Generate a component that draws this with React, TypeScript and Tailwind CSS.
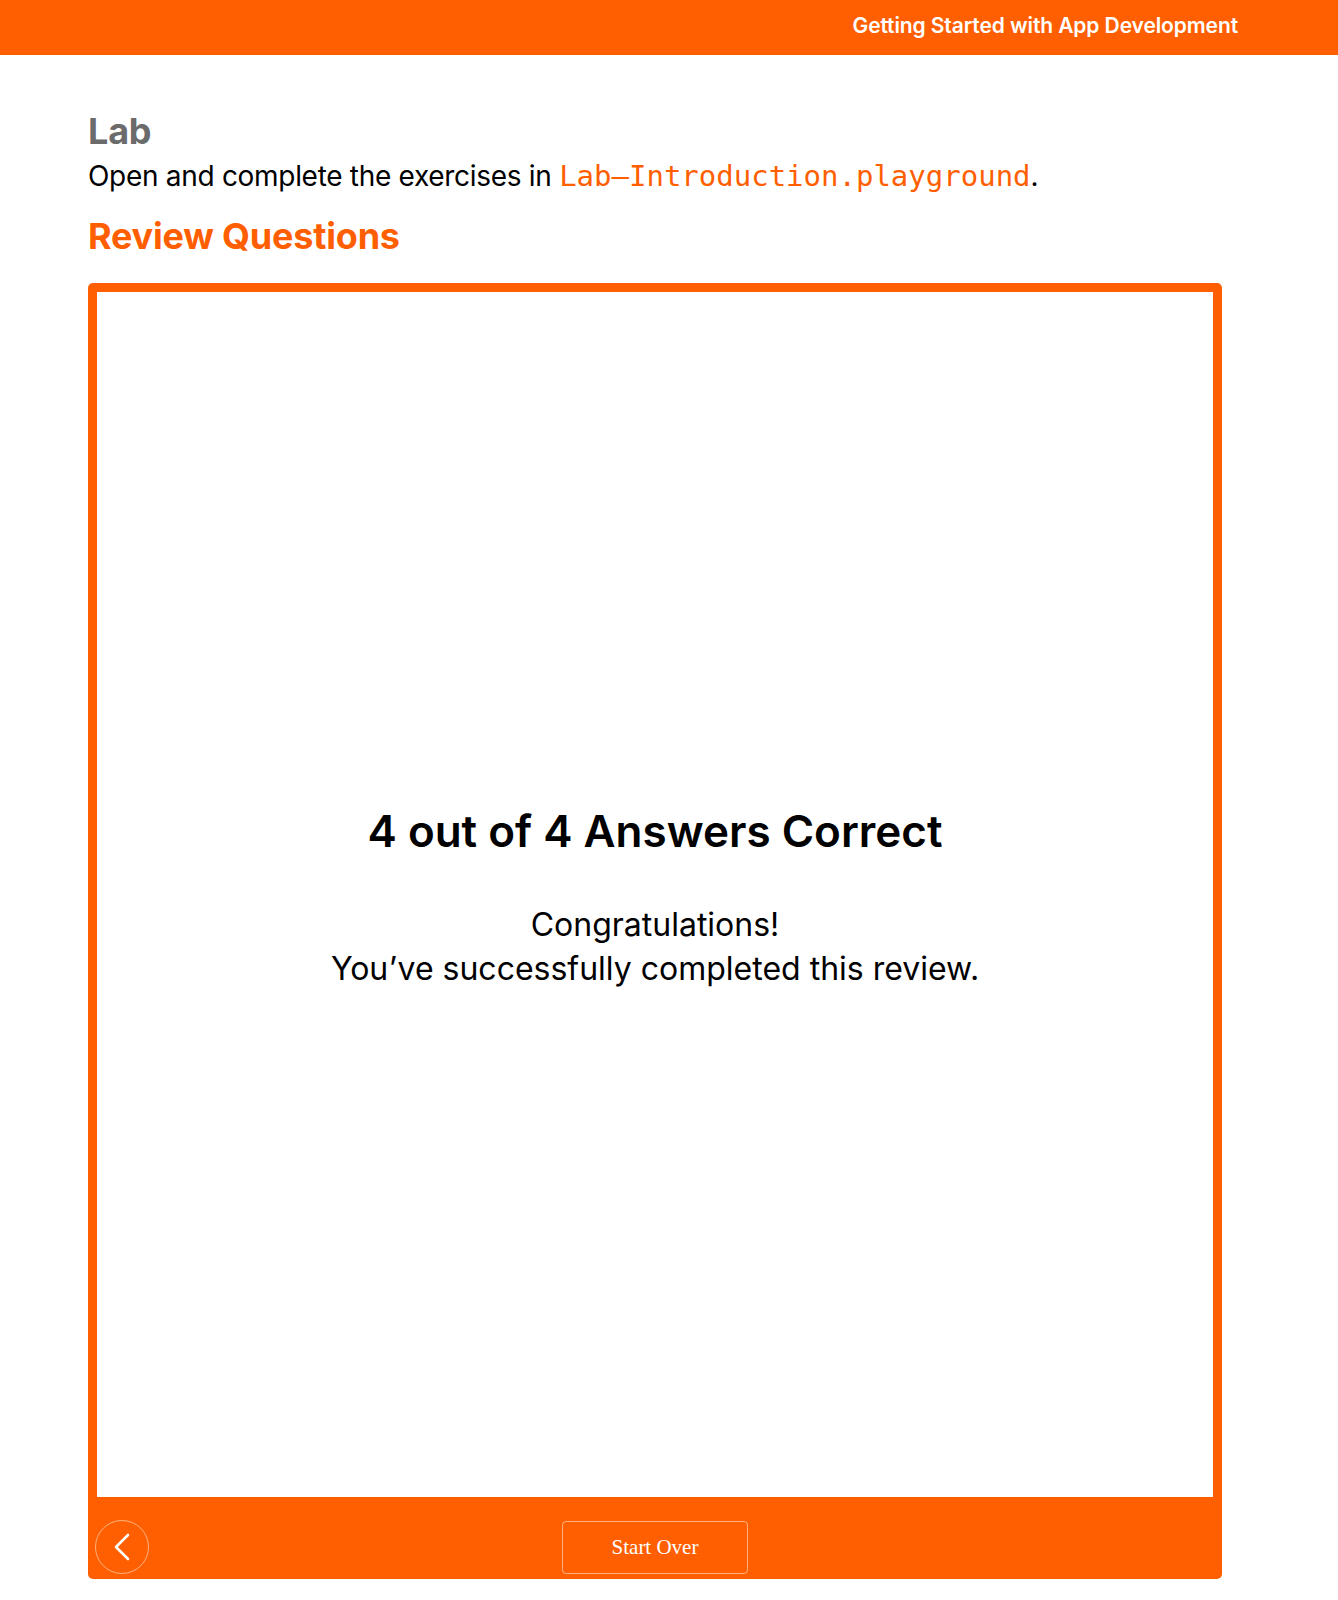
export default function App() {
  return (
    <div className="min-h-[1600px] bg-white font-['Inter','Noto_Sans',sans-serif]">
      {/* Top bar */}
      <header className="h-[55px] bg-[#ff5f00] flex items-center justify-end pr-[100px] pb-[4px]">
        <span className="text-white font-semibold text-[21px] tracking-[-0.1px]">
          Getting Started with App Development
        </span>
      </header>

      <main className="px-[88px] pt-[55px]">
        <h2 className="text-[36px] leading-[43px] font-bold text-[#6b6b6b] tracking-[-0.2px]">Lab</h2>
        <p className="mt-[6px] text-[28px] leading-[34px] text-black tracking-[-0.3px]">
          Open and complete the exercises in{" "}
          <code className="font-['DejaVu_Sans_Mono',monospace] text-[#ff5f00] text-[29px] tracking-normal">
            Lab—Introduction.playground
          </code>
          .
        </p>
        <h2 className="mt-[22px] text-[36px] leading-[43px] font-bold text-[#ff5f00] tracking-[-0.2px]">
          Review Questions
        </h2>

        {/* Review card */}
        <section className="mt-[25px] w-[1134px] rounded-[5px] bg-[#ff5f00] px-[9px] pt-[9px]">
          <div className="h-[1205px] bg-white flex flex-col items-center justify-center text-black pt-[6px]">
            <h1 className="text-[44px] leading-[52px] font-semibold">
              4 out of 4 Answers Correct
            </h1>
            <p className="mt-[46px] text-[32px] leading-[44px] text-center">
              Congratulations!
              <br />
              You’ve successfully completed this review.
            </p>
          </div>

          <div className="h-[82px] grid grid-cols-[1fr_auto_1fr] items-end pb-[5px]">
            <button className="justify-self-start ml-[-2px] w-[54px] h-[54px] rounded-full border-[1.5px] border-white/50 flex items-center justify-center">
              <svg width="18" height="28" viewBox="0 0 18 28" fill="none">
                <polyline
                  points="15,2 3,14 15,26"
                  stroke="white"
                  strokeWidth="2.6"
                  strokeLinecap="round"
                  strokeLinejoin="round"
                />
              </svg>
            </button>
            <button className="w-[186px] h-[53px] rounded-[4px] border-[1.5px] border-white/50 text-white text-[21px] font-['Liberation_Serif',serif]">
              Start Over
            </button>
            <div />
          </div>
        </section>
      </main>
    </div>
  );
}
